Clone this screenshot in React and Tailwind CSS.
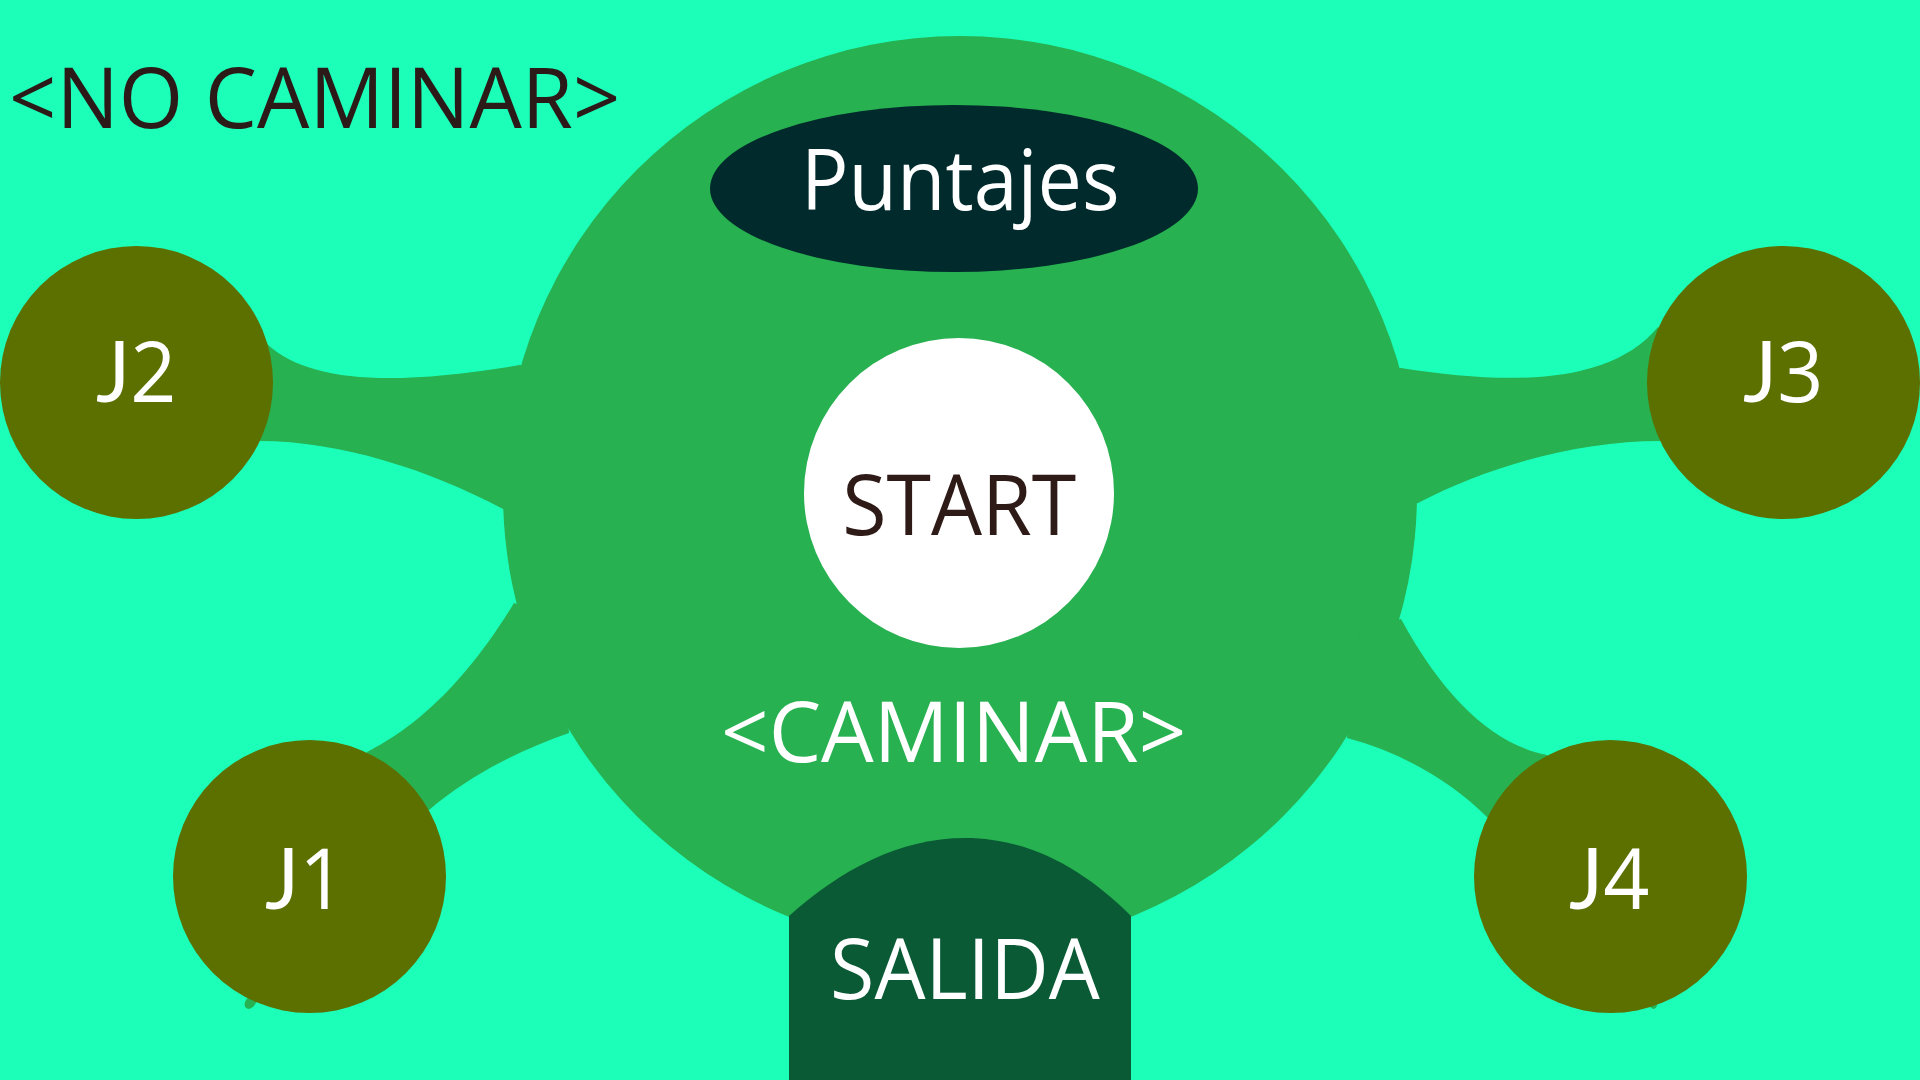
function Player({ pos, digit, extra }) {
  return (
    <div
      className={`absolute flex h-[273px] w-[273px] items-center justify-center rounded-full bg-[#5c7000] text-[85px] leading-none text-white ${pos} ${extra}`}
    >
      <span className="scale-x-[0.95] whitespace-nowrap">
        <span className="font-['Lato',sans-serif]">J</span>
        {digit}
      </span>
    </div>
  );
}

export default function App() {
  return (
    <div className="relative w-[1920px] h-[1080px] overflow-hidden bg-[#1cffb9] font-['Open_Sans',sans-serif] font-normal">
      <svg className="absolute inset-0" width="1920" height="1080" viewBox="0 0 1920 1080">
        <g fill="#27b150">
          <path d="M250,996 C244,1000 242,1008 249,1009 C254,1008 257,1003 257,996 Z" />
          <path d="M1652,996 C1656,1000 1660,1006 1654,1009 C1649,1008 1647,1003 1647,996 Z" />
          <circle cx="960" cy="493" r="457" />
          <path d="M266,343 C310,385 400,385 520,365 L560,365 L560,515 L503,509 C430,470 340,441 260,441 L200,400 Z" />
          <path d="M1658,327 C1610,385 1510,385 1401,368 L1360,368 L1360,510 L1418,503 C1490,465 1580,441 1660,441 L1720,400 Z" />
          <path d="M367,752 C400,735 455,700 514,603 L560,620 L569,733 C520,750 470,775 429,810 L330,860 Z" />
          <path d="M1401,619 C1445,700 1495,745 1547,755 L1600,860 L1488,818 C1450,780 1400,752 1347,738 L1360,630 Z" />
        </g>
        <path
          d="M789,1080 L789,916 C840,870 900,838 965,838 C1030,838 1085,870 1131,916 L1131,1080 Z"
          fill="#0a5a35"
        />
      </svg>

      {/* Free labels */}
      <div className="absolute left-[9px] top-[53px] origin-left scale-x-[0.975] whitespace-nowrap text-[85px] leading-none text-[#2b1a17]">
        &lt;NO CAMINAR&gt;
      </div>
      <div className="absolute left-[721px] top-[687px] origin-left scale-x-[0.98] whitespace-nowrap text-[85px] leading-none text-white">
        &lt;CAMINAR&gt;
      </div>

      {/* Puntajes */}
      <div className="absolute left-[710px] top-[105px] flex h-[167px] w-[488px] items-center justify-center rounded-[50%] bg-[#002a2b] pb-[23px] pl-[12px] text-[85px] leading-none text-white">
        <span className="scale-x-[0.93] whitespace-nowrap">Puntajes</span>
      </div>

      {/* START */}
      <div className="absolute left-[804px] top-[338px] flex h-[310px] w-[310px] items-center justify-center rounded-full bg-white pt-[19px] text-[85px] leading-none text-[#2e1a16]">
        <span className="scale-x-[0.95] whitespace-nowrap">START</span>
      </div>

      {/* SALIDA */}
      <div className="absolute left-[789px] top-[838px] flex w-[342px] justify-center pl-[10px] pt-[86px] text-[85px] leading-none text-white">
        <span className="scale-x-[0.95] whitespace-nowrap">SALIDA</span>
      </div>

      {/* Players */}
      <Player pos="left-[0px] top-[246px]" digit="2" extra="pb-[26px]" />
      <Player pos="left-[1647px] top-[246px]" digit="3" extra="pb-[26px]" />
      <Player pos="left-[173px] top-[740px]" digit="1" extra="pr-[8px]" />
      <Player pos="left-[1474px] top-[740px]" digit="4" extra="pr-[2px]" />
    </div>
  );
}
